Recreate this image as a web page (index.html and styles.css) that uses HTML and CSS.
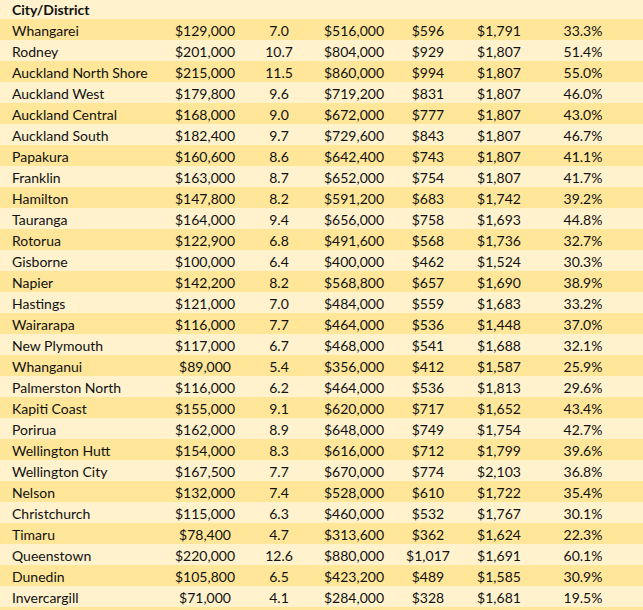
FILE: index.html
```html
<!DOCTYPE html>
<html>
<head>
<meta charset="utf-8">
<link rel="stylesheet" href="styles.css">
</head>
<body>
<div class="sheet">
  <div class="row head"><div class="name">City/District</div><div></div><div></div><div></div><div></div><div></div><div></div></div>
  <div class="row"><div class="name">Whangarei</div><div>$129,000</div><div>7.0</div><div>$516,000</div><div>$596</div><div>$1,791</div><div>33.3%</div></div>
  <div class="row"><div class="name">Rodney</div><div>$201,000</div><div>10.7</div><div>$804,000</div><div>$929</div><div>$1,807</div><div>51.4%</div></div>
  <div class="row"><div class="name">Auckland North Shore</div><div>$215,000</div><div>11.5</div><div>$860,000</div><div>$994</div><div>$1,807</div><div>55.0%</div></div>
  <div class="row"><div class="name">Auckland West</div><div>$179,800</div><div>9.6</div><div>$719,200</div><div>$831</div><div>$1,807</div><div>46.0%</div></div>
  <div class="row"><div class="name">Auckland Central</div><div>$168,000</div><div>9.0</div><div>$672,000</div><div>$777</div><div>$1,807</div><div>43.0%</div></div>
  <div class="row"><div class="name">Auckland South</div><div>$182,400</div><div>9.7</div><div>$729,600</div><div>$843</div><div>$1,807</div><div>46.7%</div></div>
  <div class="row"><div class="name">Papakura</div><div>$160,600</div><div>8.6</div><div>$642,400</div><div>$743</div><div>$1,807</div><div>41.1%</div></div>
  <div class="row"><div class="name">Franklin</div><div>$163,000</div><div>8.7</div><div>$652,000</div><div>$754</div><div>$1,807</div><div>41.7%</div></div>
  <div class="row"><div class="name">Hamilton</div><div>$147,800</div><div>8.2</div><div>$591,200</div><div>$683</div><div>$1,742</div><div>39.2%</div></div>
  <div class="row"><div class="name">Tauranga</div><div>$164,000</div><div>9.4</div><div>$656,000</div><div>$758</div><div>$1,693</div><div>44.8%</div></div>
  <div class="row"><div class="name">Rotorua</div><div>$122,900</div><div>6.8</div><div>$491,600</div><div>$568</div><div>$1,736</div><div>32.7%</div></div>
  <div class="row"><div class="name">Gisborne</div><div>$100,000</div><div>6.4</div><div>$400,000</div><div>$462</div><div>$1,524</div><div>30.3%</div></div>
  <div class="row"><div class="name">Napier</div><div>$142,200</div><div>8.2</div><div>$568,800</div><div>$657</div><div>$1,690</div><div>38.9%</div></div>
  <div class="row"><div class="name">Hastings</div><div>$121,000</div><div>7.0</div><div>$484,000</div><div>$559</div><div>$1,683</div><div>33.2%</div></div>
  <div class="row"><div class="name">Wairarapa</div><div>$116,000</div><div>7.7</div><div>$464,000</div><div>$536</div><div>$1,448</div><div>37.0%</div></div>
  <div class="row"><div class="name">New Plymouth</div><div>$117,000</div><div>6.7</div><div>$468,000</div><div>$541</div><div>$1,688</div><div>32.1%</div></div>
  <div class="row"><div class="name">Whanganui</div><div>$89,000</div><div>5.4</div><div>$356,000</div><div>$412</div><div>$1,587</div><div>25.9%</div></div>
  <div class="row"><div class="name">Palmerston North</div><div>$116,000</div><div>6.2</div><div>$464,000</div><div>$536</div><div>$1,813</div><div>29.6%</div></div>
  <div class="row"><div class="name">Kapiti Coast</div><div>$155,000</div><div>9.1</div><div>$620,000</div><div>$717</div><div>$1,652</div><div>43.4%</div></div>
  <div class="row"><div class="name">Porirua</div><div>$162,000</div><div>8.9</div><div>$648,000</div><div>$749</div><div>$1,754</div><div>42.7%</div></div>
  <div class="row"><div class="name">Wellington Hutt</div><div>$154,000</div><div>8.3</div><div>$616,000</div><div>$712</div><div>$1,799</div><div>39.6%</div></div>
  <div class="row"><div class="name">Wellington City</div><div>$167,500</div><div>7.7</div><div>$670,000</div><div>$774</div><div>$2,103</div><div>36.8%</div></div>
  <div class="row"><div class="name">Nelson</div><div>$132,000</div><div>7.4</div><div>$528,000</div><div>$610</div><div>$1,722</div><div>35.4%</div></div>
  <div class="row"><div class="name">Christchurch</div><div>$115,000</div><div>6.3</div><div>$460,000</div><div>$532</div><div>$1,767</div><div>30.1%</div></div>
  <div class="row"><div class="name">Timaru</div><div>$78,400</div><div>4.7</div><div>$313,600</div><div>$362</div><div>$1,624</div><div>22.3%</div></div>
  <div class="row"><div class="name">Queenstown</div><div>$220,000</div><div>12.6</div><div>$880,000</div><div>$1,017</div><div>$1,691</div><div>60.1%</div></div>
  <div class="row"><div class="name">Dunedin</div><div>$105,800</div><div>6.5</div><div>$423,200</div><div>$489</div><div>$1,585</div><div>30.9%</div></div>
  <div class="row"><div class="name">Invercargill</div><div>$71,000</div><div>4.1</div><div>$284,000</div><div>$328</div><div>$1,681</div><div>19.5%</div></div>
  <div class="row"><div class="name"></div></div>
</div>
</body>
</html>
```
FILE: styles.css
```css
html, body {
  margin: 0;
  padding: 0;
  background: #FFF2CC;
}
.sheet {
  width: 643px;
  font-family: Lato, "Open Sans", sans-serif;
  font-size: 14px;
  color: #111;
}
.row {
  display: grid;
  grid-template-columns: 167px 76px 72px 78px 70px 72px 96px;
  height: 21px;
  line-height: 21px;
  background: #FFF2CC;
  white-space: nowrap;
}
.row:nth-child(even) {
  background: #FFE699;
}
.row.head {
  height: 19px;
  line-height: 19px;
}
.row > div {
  text-align: center;
  padding-top: 1px;
}
.row > .name {
  text-align: left;
  padding-left: 12px;
}
.head > div {
  padding-top: 0;
}
.head .name {
  font-weight: bold;
}
```
